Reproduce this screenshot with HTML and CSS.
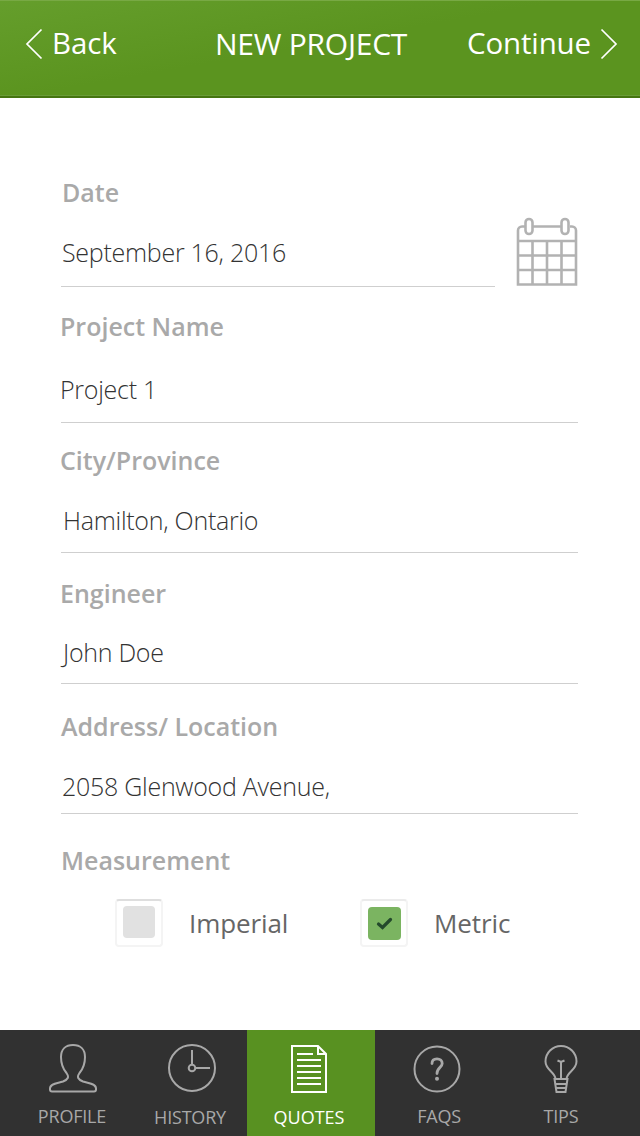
FILE: index.html
```html
<!DOCTYPE html>
<html lang="en">
<head>
<meta charset="utf-8">
<title>New Project</title>
<link rel="stylesheet" href="styles.css">
</head>
<body>
<header class="topbar">
  <a class="nav back"><svg width="18" height="32" viewBox="0 0 18 32"><path d="M16.500 1.500 2 16l14.500 14.500"/></svg><span class="back-text">Back</span></a>
  <h1 class="title">NEW PROJECT</h1>
  <a class="nav next"><span class="next-text">Continue</span><svg width="18" height="32" viewBox="0 0 18 32"><path d="M1.500 1.500 16 16 1.500 30.500"/></svg></a>
</header>
<main class="form">
  <section class="date-row">
    <div class="field date">
      <div class="label">Date</div>
      <div class="value">September 16, 2016</div>
    </div>
    <svg class="calendar" width="62" height="70" viewBox="0 0 62 70">
      <path d="M9 9.500H6a4 4 0 0 0-4 4V67.500H60V13.500a4 4 0 0 0-4-4H54M17 9.500H46M2 24H60M2 38.500H60M2 53H60M16.500 24V67.500M31 24V67.500M45.500 24V67.500"/>
      <rect x="9.500" y="2" width="7" height="15" rx="3.500"/>
      <rect x="45.500" y="2" width="7" height="15" rx="3.500"/>
    </svg>
  </section>
  <section class="field project">
    <div class="label">Project Name</div>
    <div class="value">Project 1</div>
  </section>
  <section class="field city">
    <div class="label">City/Province</div>
    <div class="value">Hamilton, Ontario</div>
  </section>
  <section class="field engineer">
    <div class="label">Engineer</div>
    <div class="value">John Doe</div>
  </section>
  <section class="field address">
    <div class="label">Address/ Location</div>
    <div class="value">2058 Glenwood Avenue,</div>
  </section>
  <section class="measurement">
    <div class="label">Measurement</div>
    <div class="options">
      <div class="option imperial"><span class="box"><span class="fill"></span></span><span class="option-text">Imperial</span></div>
      <div class="option metric"><span class="box"><span class="fill"><svg width="33" height="33" viewBox="0 0 33 33"><path d="M10.500 17 14.500 20.500 22.500 12.500"/></svg></span></span><span class="option-text">Metric</span></div>
    </div>
  </section>
</main>
<nav class="tabs">
  <a class="tab profile">
    <svg width="50" height="50" viewBox="0 0 50 50"><path d="M25 2C17.500 2 13 6.500 13 14C13 21 15.500 26.500 18.500 30C21.500 34 20 36.500 15 38.500C9 40.500 2 40.500 2 45.500V46.500Q2 48.500 4 48.500H46Q48 48.500 48 46.500V45.500C48 40.500 41 40.500 35 38.500C30 36.500 28.500 34 31.500 30C34.500 26.500 37 21 37 14C37 6.500 32.500 2 25 2Z"/></svg>
    <span class="tab-text">PROFILE</span>
  </a>
  <a class="tab history">
    <svg width="50" height="50" viewBox="0 0 50 50"><circle cx="25" cy="25" r="23"/><circle cx="25" cy="25" r="3.300"/><path d="M25 7V21.500M28.500 25H43"/></svg>
    <span class="tab-text">HISTORY</span>
  </a>
  <a class="tab quotes">
    <svg width="38" height="50" viewBox="0 0 38 50"><path d="M28 2H2V48H36V10ZM28 2V10H36M7 10H23M7 16H31M7 22H31M7 28H31M7 34H31M7 40H31"/></svg>
    <span class="tab-text">QUOTES</span>
  </a>
  <a class="tab faqs">
    <svg width="50" height="50" viewBox="0 0 50 50"><circle cx="25" cy="25" r="22.500"/><path class="mark" d="M20 19.500C20 16.500 22 14.800 25 14.800C28 14.800 30.200 16.700 30.200 19.500C30.200 23.500 25 23.500 25 29.500"/><circle class="dot" cx="25" cy="34.800" r="2"/></svg>
    <span class="tab-text">FAQS</span>
  </a>
  <a class="tab tips">
    <svg width="36" height="50" viewBox="0 0 36 50"><path d="M12.500 35C12 28 2.500 26 2.500 17.500a15.500 15.500 0 0 1 31 0C33.500 26 24 28 23.500 35M11.500 35H24.500L22.500 48H13.500ZM12.500 40H23.500M13 44H23M18 35V18M14.500 16.500 18 18 21.500 16.500"/></svg>
    <span class="tab-text">TIPS</span>
  </a>
</nav>
</body>
</html>
```
FILE: styles.css
```css
* { box-sizing: border-box; }
body {
  margin: 0;
  width: 640px;
  height: 1136px;
  display: flex;
  flex-direction: column;
  background: #fff;
  font-family: "Open Sans", sans-serif;
  overflow: hidden;
}
svg {
  display: block;
  flex: none;
  fill: none;
  stroke: currentColor;
}
.topbar {
  height: 98px;
  flex: none;
  display: grid;
  grid-template-columns: 190px 244px 206px;
  padding-top: 22px;
  color: #fff;
  font-size: 29.5px;
  line-height: 41px;
  background: linear-gradient(170deg, #659e2c 0%, #5b941f 48%, #5b941f 100%);
  border-bottom: 2px solid #457510;
  box-shadow: inset 0 1px #78a944, inset 0 -1px #6a9c38;
}
.nav { display: flex; letter-spacing: -0.15px; }
.nav svg { margin-top: 6px; stroke-width: 1.7; }
.back { padding-left: 25px; }
.back-text { margin-left: 9px; }
.title {
  margin: 0;
  padding: 1px 0 0 25px;
  font-size: 30px;
  font-weight: 400;
  letter-spacing: -0.25px;
  white-space: nowrap;
}
.next { padding-left: 33px; }
.next svg { margin-left: 9px; }
.form {
  height: 932px;
  flex: none;
  padding: 0 62px 0 61px;
}
.label, .value {
  font-size: 25px;
  line-height: 34px;
  white-space: nowrap;
}
.label { color: #a9a9a9; font-weight: 600; }
.value { color: #333; font-weight: 300; letter-spacing: -0.27px; }
.field {
  display: flex;
  flex-direction: column;
  gap: 25px;
  border-bottom: 1px solid #cfcfcf;
}
.date-row { display: flex; justify-content: space-between; }
.date { width: 434px; height: 189px; padding-top: 77px; gap: 26px; }
.date .label, .date .value { margin-left: 1px; }
.calendar { margin-top: 119px; color: #b2b2b2; stroke-width: 2.6; }
.calendar rect { fill: #fff; }
.project { height: 136px; padding-top: 22px; gap: 29px; }
.project .label, .project .value, .city .label, .engineer .label { margin-left: -1px; }
.city { height: 130px; padding-top: 20px; gap: 26px; }
.city .value { margin-left: 2px; }
.engineer { height: 131px; padding-top: 23px; }
.engineer .value { margin-left: 2px; }
.address { height: 130px; padding-top: 25px; gap: 26px; }
.address .value { margin-left: 1px; }
.measurement { padding-top: 29px; }
.options { display: flex; padding: 22px 0 0 54px; }
.option {
  display: flex;
  color: #666;
  font-size: 26px;
  line-height: 48px;
  letter-spacing: -0.1px;
}
.imperial { width: 245px; }
.option-text { margin-left: 26px; }
.box {
  width: 48px;
  height: 48px;
  display: grid;
  place-items: center;
  border: 2px solid #f4f4f4;
  border-radius: 4px;
}
.imperial .box { border-top-color: #dedede; padding-bottom: 2px; }
.metric .box { border-top-color: #ebebeb; }
.fill {
  width: 33px;
  height: 33px;
  border-radius: 4px;
  background: #e1e1e1;
}
.imperial .fill { width: 32px; height: 32px; }
.metric .fill { background: #7bb461; }
.fill svg {
  color: #24492c;
  stroke-width: 3.2;
  stroke-linecap: round;
}
.tabs {
  height: 106px;
  flex: none;
  display: grid;
  grid-template-columns: 133px 114px 128px 128px 137px;
  background: #313131;
  color: #a8a8a8;
}
.tab {
  display: flex;
  flex-direction: column;
  align-items: center;
  font-size: 18px;
  line-height: 24px;
  letter-spacing: -0.2px;
}
.tab svg { stroke-width: 2; }
.tab-text { margin-top: auto; }
.profile { padding: 13px 0 8px 11px; }
.profile svg { margin-left: 2px; }
.history { padding: 13px 0 7px; }
.history svg { margin-left: 4px; }
.quotes { padding: 14px 4px 7px 0; background: #589121; color: #fff; letter-spacing: 0; }
.faqs { padding: 14px 5px 8px 0; }
.faqs .tab-text { margin-left: 5px; }
.tips { padding: 14px 21px 8px 0; }
.faqs .mark { stroke-width: 2.8; stroke-linecap: round; }
.faqs .dot { fill: currentColor; stroke: none; }
```
